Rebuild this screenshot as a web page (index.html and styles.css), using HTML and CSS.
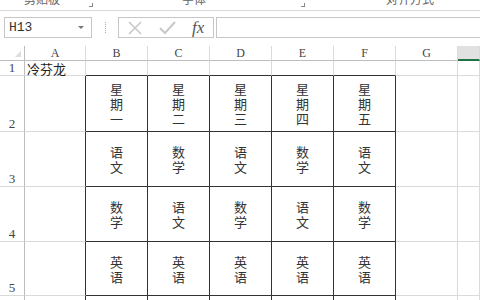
FILE: index.html
```html
<!DOCTYPE html>
<html lang="zh-CN">
<head>
    <meta charset="UTF-8">
    <title>课程表 - Excel</title>
    <link rel="stylesheet" href="styles.css">
</head>
<body>
<!-- Ribbon group labels (cut off at the top) -->
<div class="ribbon">
    <div class="group group-clip"><span class="group-label">剪贴板</span><span class="launcher"></span></div>
    <div class="group group-font"><span class="group-label">字体</span><span class="launcher"></span></div>
    <div class="group group-align"><span class="group-label">对齐方式</span></div>
</div>

<!-- Formula bar -->
<div class="formula-bar">
    <div class="name-box">
        <span>H13</span>
        <span class="name-arrow"></span>
    </div>
    <div class="grip"></div>
    <div class="fx-box">
        <svg class="fx-icon" width="14" height="14" viewBox="0 0 14 14">
            <path d="M1 1 L13 13 M13 1 L1 13" stroke="#c8c8c8" stroke-width="1.6" fill="none"/>
        </svg>
        <svg class="fx-icon" width="17" height="14" viewBox="0 0 17 14">
            <path d="M1 7 L6 12 L16 1" stroke="#c8c8c8" stroke-width="2" fill="none"/>
        </svg>
        <span class="fx-label">fx</span>
    </div>
    <div class="formula-input"></div>
</div>

<!-- Sheet grid -->
<div class="sheet">
    <!-- header row -->
    <div class="cell corner"><span class="corner-mark"></span></div>
    <div class="cell col-head">A</div>
    <div class="cell col-head">B</div>
    <div class="cell col-head">C</div>
    <div class="cell col-head">D</div>
    <div class="cell col-head">E</div>
    <div class="cell col-head">F</div>
    <div class="cell col-head">G</div>
    <div class="cell col-head col-selected"></div>

    <!-- row 1 -->
    <div class="cell row-head">1</div>
    <div class="cell text-cell">冷芬龙</div>
    <div class="cell above-table"></div>
    <div class="cell above-table"></div>
    <div class="cell above-table"></div>
    <div class="cell above-table"></div>
    <div class="cell above-table"></div>
    <div class="cell"></div>
    <div class="cell"></div>

    <!-- row 2 -->
    <div class="cell row-head">2</div>
    <div class="cell before-table"></div>
    <div class="cell table-cell">星<br>期<br>一</div>
    <div class="cell table-cell">星<br>期<br>二</div>
    <div class="cell table-cell">星<br>期<br>三</div>
    <div class="cell table-cell">星<br>期<br>四</div>
    <div class="cell table-cell">星<br>期<br>五</div>
    <div class="cell"></div>
    <div class="cell"></div>

    <!-- row 3 -->
    <div class="cell row-head">3</div>
    <div class="cell before-table"></div>
    <div class="cell table-cell">语<br>文</div>
    <div class="cell table-cell">数<br>学</div>
    <div class="cell table-cell">语<br>文</div>
    <div class="cell table-cell">数<br>学</div>
    <div class="cell table-cell">语<br>文</div>
    <div class="cell"></div>
    <div class="cell"></div>

    <!-- row 4 -->
    <div class="cell row-head">4</div>
    <div class="cell before-table"></div>
    <div class="cell table-cell">数<br>学</div>
    <div class="cell table-cell">语<br>文</div>
    <div class="cell table-cell">数<br>学</div>
    <div class="cell table-cell">语<br>文</div>
    <div class="cell table-cell">数<br>学</div>
    <div class="cell"></div>
    <div class="cell"></div>

    <!-- row 5 -->
    <div class="cell row-head">5</div>
    <div class="cell before-table"></div>
    <div class="cell table-cell">英<br>语</div>
    <div class="cell table-cell">英<br>语</div>
    <div class="cell table-cell">英<br>语</div>
    <div class="cell table-cell">英<br>语</div>
    <div class="cell table-cell">英<br>语</div>
    <div class="cell"></div>
    <div class="cell"></div>

    <!-- row 6 (cut off) -->
    <div class="cell row-head"></div>
    <div class="cell before-table"></div>
    <div class="cell table-cell"></div>
    <div class="cell table-cell"></div>
    <div class="cell table-cell"></div>
    <div class="cell table-cell"></div>
    <div class="cell table-cell"></div>
    <div class="cell"></div>
    <div class="cell"></div>
</div>
</body>
</html>
```

FILE: styles.css
```css
* {
    box-sizing: border-box;
}
body {
    margin: 0;
    width: 480px;
    height: 300px;
    overflow: hidden;
    background-color: #fff;
    font-family: "Noto Sans CJK SC", "Liberation Sans", sans-serif;
    color: #222;
}

/* Ribbon labels */
.ribbon {
    display: flex;
    height: 11px;
    overflow: hidden;
    border-bottom: 1px solid #d8d8d8;
    background-color: #fff;
}
.group {
    position: relative;
    flex: none;
    display: flex;
    justify-content: center;
}
.group-clip { width: 96px; }
.group-font { width: 212px; }
.group-align { width: 204px; }
.group-label {
    margin-top: -9px;
    font-size: 12px;
    line-height: 16px;
    color: #666;
}
.group-clip .group-label { margin-right: 12px; }
.group-font .group-label { margin-right: 16px; }
.launcher {
    position: absolute;
    right: 3px;
    top: 3px;
    width: 4px;
    height: 4px;
    border-right: 1px solid #888;
    border-bottom: 1px solid #888;
}

/* Formula bar */
.formula-bar {
    display: flex;
    align-items: flex-start;
    height: 35px;
    padding: 6px 0 0 4px;
}
.name-box {
    position: relative;
    width: 88px;
    height: 21px;
    border: 1px solid #c6c6c6;
    padding-left: 4px;
    font-family: "Liberation Mono", monospace;
    font-size: 13px;
    line-height: 19px;
    color: #333;
}
.name-arrow {
    position: absolute;
    right: 7px;
    top: 8px;
    border-left: 3px solid transparent;
    border-right: 3px solid transparent;
    border-top: 3px solid #777;
}
.grip {
    width: 1px;
    height: 11px;
    margin: 5px 0 0 13px;
    border-left: 1px dotted #aaa;
}
.fx-box {
    display: flex;
    align-items: center;
    width: 96px;
    height: 21px;
    margin-left: 12px;
    border: 1px solid #c6c6c6;
    padding-left: 9px;
    gap: 17px;
}
.fx-icon {
    flex: none;
}
.fx-label {
    margin-left: -1px;
    font-family: "Liberation Serif", serif;
    font-style: italic;
    font-size: 17px;
    line-height: 19px;
    color: #555;
}
.formula-input {
    flex: 1;
    height: 21px;
    margin-left: 2px;
    border: 1px solid #c6c6c6;
    border-right: none;
}

/* Sheet */
.sheet {
    display: grid;
    grid-template-columns: 25px 61px repeat(6, 62px) 1fr;
    grid-template-rows: 15px 15px 56px 55px 55px 54px 10px;
}
.cell {
    border-right: 1px solid #dadada;
    border-bottom: 1px solid #dadada;
}
.corner {
    position: relative;
    border-right: 1px solid #bdbdbd;
    border-bottom: 1px solid #bdbdbd;
}
.corner-mark {
    position: absolute;
    right: 3px;
    bottom: 3px;
    border-left: 6px solid transparent;
    border-bottom: 6px solid #dcdcdc;
}
.col-head {
    border-right: 1px solid #dadada;
    border-bottom: 1px solid #bdbdbd;
    text-align: center;
    font-family: "Liberation Serif", serif;
    font-size: 12px;
    line-height: 15px;
    color: #444;
}
.col-selected {
    background-color: #e1e1e1;
    border-bottom: 2px solid #217346;
}
.row-head {
    display: flex;
    align-items: flex-end;
    justify-content: center;
    border-right: 1px solid #bdbdbd;
    font-family: "Liberation Serif", serif;
    font-size: 13px;
    line-height: 14px;
    color: #444;
}
.text-cell {
    padding-left: 2px;
    font-size: 13px;
    line-height: 15px;
    white-space: nowrap;
    overflow: visible;
}
.above-table {
    border-bottom: 1px solid #333;
}
.before-table {
    border-right: 1px solid #333;
}
.table-cell {
    display: flex;
    align-items: center;
    justify-content: center;
    text-align: center;
    border-right: 1px solid #333;
    border-bottom: 1px solid #333;
    font-size: 13px;
    line-height: 15px;
    color: #333;
}
```
